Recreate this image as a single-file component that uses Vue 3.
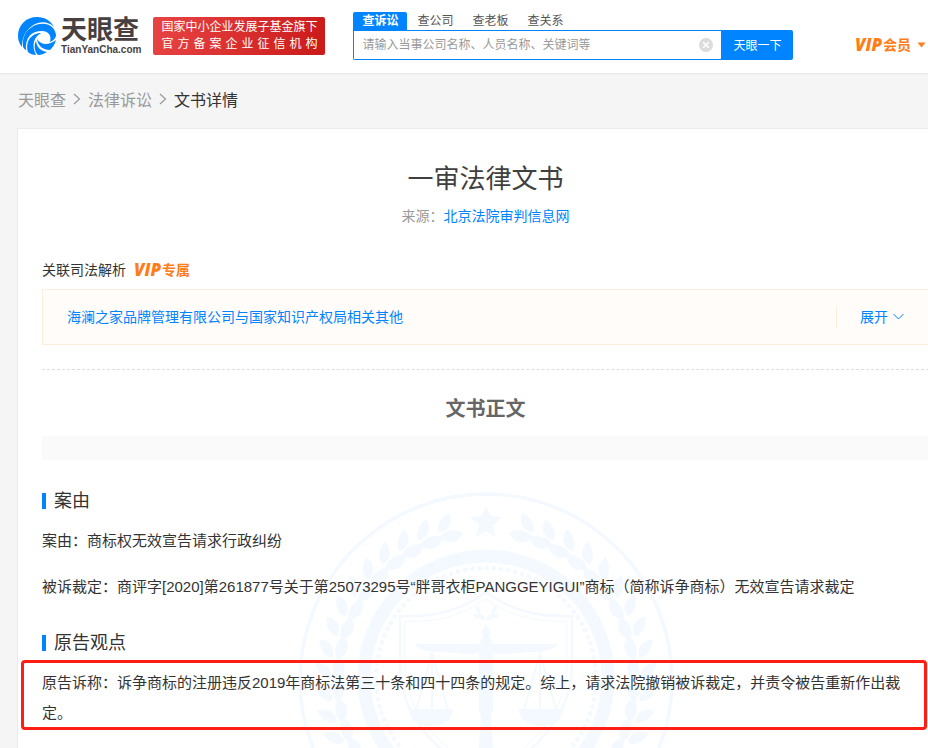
<script setup>
import { ref } from 'vue'

const keyword = ref('')
const tabs = ['查诉讼', '查公司', '查老板', '查关系']
const activeTab = ref('查诉讼')

const sections = [
  {
    title: '案由',
    paragraphs: [
      '案由：商标权无效宣告请求行政纠纷',
      '被诉裁定：商评字[2020]第261877号关于第25073295号“胖哥衣柜PANGGEYIGUI”商标（简称诉争商标）无效宣告请求裁定'
    ]
  },
  {
    title: '原告观点',
    marked: true,
    paragraphs: [
      '原告诉称：诉争商标的注册违反2019年商标法第三十条和四十四条的规定。综上，请求法院撤销被诉裁定，并责令被告重新作出裁定。'
    ]
  }
]

const leafAngles = Array.from({ length: 17 }, (_, i) => 17 + i * 8)
</script>

<template>
  <div class="page">
    <header class="header">
      <a class="logo" href="#">
        <svg class="logo-mark" viewBox="0 0 38 38" aria-hidden="true">
          <path d="M19 0 C27 0 33 4 36 10 C30 4 21 4 14 9 C7 14 4 21 4 30 C1 26 0 23 0 19 C0 8 8 0 19 0Z" fill="#0084ff" />
          <path d="M14 10 C21 5 31 6 35 11 C37 14 38 16 38 19 C37 22 35 24 32 25 C34 18 30 14 24 14 C13 14 7 21 8 33 C7 33 6 31 5 30 C4 21 7 14 14 10Z" fill="#0084ff" />
          <path d="M23 16 C16 20 13 28 18 38 C15 38 12 37 10 35 C7 25 13 16 23 16Z" fill="#0084ff" />
          <path d="M18 24 C19 31 23 34 29 35 C26 37 23 38 20 38 C16 34 16 28 18 24Z" fill="#0084ff" />
          <path d="M19 22 C23 28 30 29 38 23 C37 27 35 30 32 33 C25 33 20 29 19 22Z" fill="#0084ff" />
        </svg>
        <span class="logo-words">
          <span class="logo-name">天眼查</span>
          <span class="logo-domain">TianYanCha.com</span>
        </span>
      </a>
      <div class="badge">
        <span>国家中小企业发展子基金旗下</span>
        <span class="badge-spread">官方备案企业征信机构</span>
      </div>
      <form class="search" @submit.prevent>
        <div class="tabs">
          <button
            v-for="tab in tabs"
            :key="tab"
            type="button"
            class="tab"
            :class="{ active: tab === activeTab }"
            @click="activeTab = tab"
          >{{ tab }}</button>
        </div>
        <div class="search-row">
          <div class="field">
            <input v-model="keyword" type="text" aria-label="搜索" placeholder="请输入当事公司名称、人员名称、关键词等" />
            <button type="button" class="clear" aria-label="清空" @click="keyword = ''">
              <svg viewBox="0 0 14 14"><circle cx="7" cy="7" r="7" fill="#dcdcdc" /><path d="M4.2 4.2 L9.8 9.8 M9.8 4.2 L4.2 9.8" stroke="#fff" stroke-width="1.6" /></svg>
            </button>
          </div>
          <button type="submit" class="submit">天眼一下</button>
        </div>
      </form>
      <a class="member" href="#">
        <span class="vip">VIP</span><span>会员</span>
        <svg class="caret" viewBox="0 0 9 6" aria-hidden="true"><path d="M0.5 0.5 H8.5 L4.5 5.5Z" fill="#ff7d18" /></svg>
      </a>
    </header>

    <nav class="crumbs">
      <a href="#">天眼查</a>
      <svg viewBox="0 0 8 12" aria-hidden="true"><path d="M1 1 L6.5 6 L1 11" /></svg>
      <a href="#">法律诉讼</a>
      <svg viewBox="0 0 8 12" aria-hidden="true"><path d="M1 1 L6.5 6 L1 11" /></svg>
      <span class="current">文书详情</span>
    </nav>

    <main class="card">
      <svg class="watermark" viewBox="-190 -190 380 380" aria-hidden="true">
        <g fill="none" stroke="#f3f9ff">
          <circle r="186" stroke-width="3.5" />
          <circle cy="-2" r="122" stroke-width="13" />
          <circle cy="-2" r="110" stroke-width="4.6" stroke-dasharray="0.1 7.1" stroke-linecap="round" />
          <path d="M-86 -64 C-48 -62 -20 -73 0 -88 C20 -73 48 -62 86 -64 V-12 C84 40 46 76 0 98 C-46 76 -84 40 -86 -12Z" stroke-width="2.5" />
          <path d="M-81 -59 C-46 -57 -20 -67 0 -81 C20 -67 46 -57 81 -59 V-12 C79 36 43 71 0 92 C-43 71 -79 36 -81 -12Z" stroke-width="1" />
          <path d="M-54 -27 L-70 30 M-54 -27 V30 M-54 -27 L-38 30 M54 -27 L70 30 M54 -27 V30 M54 -27 L38 30" stroke-width="2" />
        </g>
        <g fill="#f3f9ff">
          <path d="M0 -174 L4.5 -164 L16 -163 L7 -155 L10 -143 L0 -149 L-10 -143 L-7 -155 L-16 -163 L-4.5 -164Z" />
          <g v-for="side in [-1, 1]" :key="side" :transform="`scale(${side} 1)`">
            <g v-for="angle in leafAngles" :key="angle" :transform="`rotate(${angle}) translate(0 -153)`">
              <path d="M2 -2 C3 -9 -4 -16 -14 -18 C-15 -8 -9 0 2 -2Z" />
              <path d="M3 3 C-4 -3 -14 -1 -21 5 C-15 14 -3 14 3 3Z" />
            </g>
          </g>
          <g v-for="side in [-1, 1]" :key="'sprig' + side" :transform="`scale(${side} 1)`">
            <ellipse cx="4" cy="-63" rx="4" ry="2" transform="rotate(-40 4 -63)" />
            <ellipse cx="8" cy="-70" rx="4" ry="2" transform="rotate(-65 8 -70)" />
            <ellipse cx="9" cy="-64" rx="4" ry="2" transform="rotate(-20 9 -64)" />
          </g>
          <path d="M-72 -36 L-62 -36 H-7 L-3 -44 L-5 -48 L0 -56 L5 -48 L3 -44 L7 -36 H72 C65 -28 52 -28 46 -28 C30 -28 18 -24 7 -27 V30 L5 36 L8 78 H-8 L-5 36 L-7 30 V-27 C-18 -24 -30 -28 -46 -28 C-52 -28 -65 -28 -72 -36Z" />
          <path d="M-77 29 H-33 C-33 40 -42 46 -55 46 C-68 46 -77 40 -77 29Z M77 29 H33 C33 40 42 46 55 46 C68 46 77 40 77 29Z" />
        </g>
      </svg>

      <div class="content">
        <h1>一审法律文书</h1>
        <p class="source">来源：<a href="#">北京法院审判信息网</a></p>

        <div class="related-title">关联司法解析 <span class="exclusive"><span class="vip">VIP</span><span>专属</span></span></div>
        <div class="related">
          <a class="related-link" href="#">海澜之家品牌管理有限公司与国家知识产权局相关其他</a>
          <button type="button" class="expand">
            展开
            <svg viewBox="0 0 11 7" aria-hidden="true"><path d="M0.5 1 L5.5 6 L10.5 1" /></svg>
          </button>
        </div>

        <h2>文书正文</h2>
        <div class="band"></div>

        <section v-for="section in sections" :key="section.title">
          <h3>{{ section.title }}</h3>
          <div class="text" :class="{ marked: section.marked }">
            <p v-for="line in section.paragraphs" :key="line">{{ line }}</p>
          </div>
        </section>
      </div>
    </main>
  </div>
</template>

<style>
body {
  margin: 0;
  background: #f5f5f5;
}
</style>

<style scoped>
.page {
  display: flex;
  flex-direction: column;
  height: 100vh;
  overflow: hidden;
  background: #f5f5f5;
  color: #333;
  font-family: "Liberation Sans", "Noto Sans CJK SC", sans-serif;
  font-size: 14px;
}
a {
  color: #0084ff;
  text-decoration: none;
}
button,
input {
  margin: 0;
  padding: 0;
  border: 0;
  background: none;
  font-family: inherit;
}
button {
  cursor: pointer;
}
h1,
h2,
h3,
p {
  margin: 0;
}

.header {
  display: flex;
  align-items: flex-start;
  flex-shrink: 0;
  height: 73px;
  padding: 0 2px 0 18px;
  box-sizing: border-box;
  background: #fff;
  box-shadow: 0 1px 1px #e8e8e8;
}
.logo {
  display: flex;
  gap: 5px;
  margin-top: 17px;
  color: #483f40;
}
.logo-mark {
  width: 38px;
  height: 38px;
}
.logo-words {
  display: flex;
  flex-direction: column;
  gap: 2px;
  font-weight: 700;
}
.logo-name {
  font-size: 26px;
  line-height: 26px;
}
.logo-domain {
  font-size: 10px;
  line-height: 10px;
}
.badge {
  display: flex;
  flex-direction: column;
  margin: 17px 0 0 12px;
  padding: 2px 8px;
  border-radius: 2px;
  background: linear-gradient(105deg, #e84444, #ca1a1a);
  color: #fff;
  font-size: 12px;
  line-height: 17px;
  white-space: nowrap;
}
.badge-spread {
  text-align: justify;
  text-align-last: justify;
}
.search {
  flex: 0 0 440px;
  margin: 12px 0 0 28px;
}
.tabs {
  display: flex;
  gap: 1px;
}
.tab {
  height: 18px;
  padding: 0 9px;
  border-radius: 2px 2px 0 0;
  color: #555;
  font-size: 12px;
  line-height: 18px;
}
.tab.active {
  background: #0084ff;
  color: #fff;
  font-weight: 700;
}
.search-row {
  display: flex;
  height: 30px;
}
.field {
  display: flex;
  flex: 1;
  align-items: center;
  padding: 0 8px;
  border: 1px solid #0084ff;
  border-right: 0;
  border-radius: 0 0 0 2px;
}
.field input {
  flex: 1;
  min-width: 0;
  outline: 0;
  color: #333;
  font-size: 12px;
}
.field input::placeholder {
  color: #999;
}
.clear {
  display: flex;
}
.clear svg {
  width: 14px;
  height: 14px;
}
.submit {
  width: 72px;
  padding-bottom: 2px;
  border-radius: 0 2px 2px 0;
  background: #0084ff;
  color: #fff;
  font-size: 12px;
}
.member {
  display: flex;
  align-items: center;
  gap: 1px;
  height: 20px;
  margin: 35px 0 0 auto;
  color: #ff7d18;
  font-size: 14px;
  font-weight: 700;
  line-height: 20px;
}
.vip {
  font-family: "Open Sans", sans-serif;
  font-size: 17px;
  font-style: italic;
  font-weight: 800;
}
.caret {
  width: 9px;
  height: 6px;
  margin-left: 5px;
}

.crumbs {
  display: flex;
  align-items: center;
  flex-shrink: 0;
  gap: 7px;
  height: 55px;
  padding: 0 18px 4px;
  box-sizing: border-box;
  font-size: 16px;
}
.crumbs a {
  color: #999;
}
.crumbs .current {
  color: #333;
}
.crumbs svg {
  width: 8px;
  height: 12px;
  fill: none;
  stroke: #999;
  stroke-width: 1.2;
}

.card {
  position: relative;
  flex: 1;
  margin: 0 -26px 0 17px;
  border: 1px solid #ebebeb;
  border-bottom: 0;
  background: #fff;
}
.watermark {
  position: absolute;
  top: 361px;
  left: 50%;
  width: 380px;
  height: 380px;
  margin-left: -190px;
}
.content {
  position: relative;
  padding: 30px 24px 0;
}
h1 {
  color: #404040;
  font-size: 26px;
  font-weight: 400;
  line-height: 40px;
  text-align: center;
}
.source {
  margin-top: 7px;
  color: #999;
  line-height: 20px;
  text-align: center;
}
.related-title {
  display: flex;
  align-items: center;
  gap: 8px;
  height: 20px;
  margin-top: 33px;
}
.exclusive {
  display: flex;
  align-items: center;
  gap: 1px;
  color: #ff7d18;
  font-weight: 700;
}
.related {
  display: flex;
  align-items: center;
  justify-content: space-between;
  height: 56px;
  box-sizing: border-box;
  margin-top: 10px;
  padding-left: 24px;
  border: 1px solid #fdeedd;
  background: #fffcf9;
}
.related-link {
  padding-bottom: 2px;
}
.expand {
  display: flex;
  align-items: center;
  gap: 5px;
  height: 22px;
  padding: 0 24px 2px 23px;
  border-left: 1px solid #fdeedd;
  color: #0084ff;
  font-size: 14px;
}
.expand svg {
  width: 11px;
  height: 7px;
  fill: none;
  stroke: #0084ff;
}
h2 {
  margin-top: 24px;
  padding-top: 24px;
  border-top: 1px dashed #ddd;
  color: #666;
  font-size: 20px;
  line-height: 30px;
  text-align: center;
}
.band {
  height: 24px;
  margin-top: 12px;
  background: #fafafa;
}
section {
  margin-top: 29px;
}
h3 {
  display: flex;
  align-items: center;
  gap: 8px;
  font-size: 18px;
  font-weight: 400;
  line-height: 24px;
}
h3::before {
  content: "";
  width: 4px;
  height: 16px;
  background: #0084ff;
}
.text {
  position: relative;
  display: flex;
  flex-direction: column;
  gap: 16px;
  margin-top: 13px;
  font-size: 15px;
  line-height: 30px;
}
.marked::after {
  content: "";
  position: absolute;
  inset: -8px 2px -2px -21px;
  border: 3px solid #ff1e14;
  border-radius: 4px;
}
</style>
